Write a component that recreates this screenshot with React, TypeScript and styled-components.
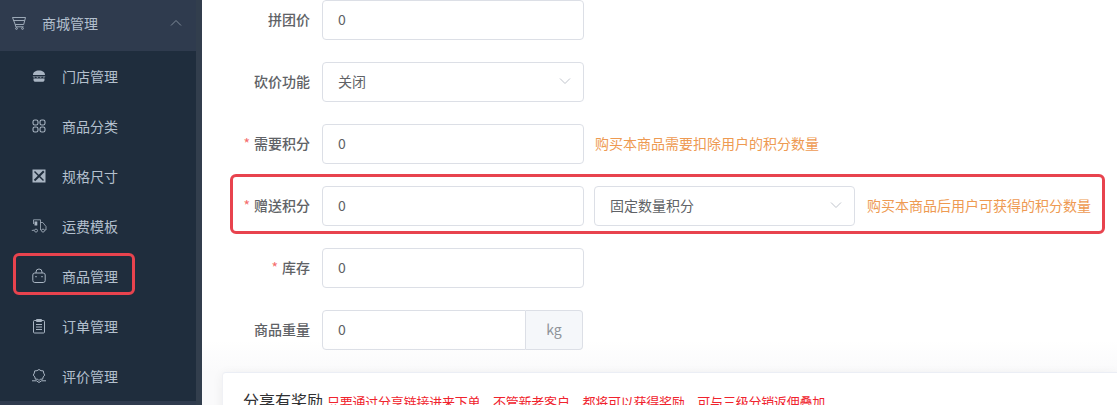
import React from "react";
import styled, { createGlobalStyle } from "styled-components";

const Global = createGlobalStyle`
  html, body { margin: 0; padding: 0; background: #fff; }
  body { font-family: "Noto Sans CJK SC", "Inter", sans-serif; }
  * { box-sizing: border-box; }
`;

const Page = styled.div`
  display: flex;
  width: 1117px;
  height: 405px;
  overflow: hidden;
  background: #fff;
`;

const Sidebar = styled.aside`
  flex: none;
  width: 202px;
  height: 405px;
  display: flex;
  flex-direction: column;
  background: #1f2d3d;
  border-right: 6px solid #323e4d;
  overflow: hidden;
`;

const ParentRow = styled.div`
  flex: none;
  height: 51px;
  display: flex;
  align-items: center;
  padding: 0 0 5px 11px;
  background: #2f3b4e;
  color: #b4c0ce;
  font-size: 14px;
`;

const ParentText = styled.span`
  margin-left: 15px;
  flex: 1;
`;

const Chevron = styled.svg`
  width: 12px;
  height: 8px;
  margin-right: 14px;
`;

const Item = styled.div`
  position: relative;
  flex: none;
  height: 50px;
  display: flex;
  align-items: center;
  padding-left: 31px;
  color: #b4c0ce;
  font-size: 14px;
`;

const ItemIcon = styled.svg`
  flex: none;
  width: 16px;
  height: 16px;
  color: #a9b5c3;
`;

const ItemText = styled.span`
  margin-left: 15px;
`;

const SideMark = styled.span`
  position: absolute;
  left: 13px;
  top: 2px;
  width: 122px;
  height: 42px;
  border: 3px solid #e8434e;
  border-radius: 6px;
`;

const SideEnd = styled.div`
  flex: none;
  height: 4px;
  background: #2f3b4e;
`;

const Main = styled.main`
  flex: 1;
  min-width: 0;
  display: flex;
  flex-direction: column;
  background: linear-gradient(#fff 340px, #fafafb 372px);
`;

const Row = styled.div`
  position: relative;
  flex: none;
  height: 40px;
  margin-bottom: 22px;
  display: flex;
  align-items: center;
`;

const Label = styled.label`
  flex: none;
  width: 108px;
  margin-right: 12px;
  padding-bottom: 2px;
  text-align: right;
  font-size: 14px;
  font-weight: 500;
  color: #606266;
`;

const Star = styled.span`
  color: #f56c6c;
  margin-right: 4px;
  font-weight: 400;
`;

const Field = styled.div<{ $w?: number }>`
  flex: none;
  width: ${(p) => p.$w ?? 262}px;
  height: 40px;
  display: flex;
  align-items: center;
  justify-content: space-between;
  padding: 0 12px 2px 15px;
  background: #fff;
  border: 1px solid #dcdfe6;
  border-radius: 4px;
  font-size: 14px;
  color: #606266;
`;

const Second = styled(Field)`
  margin-left: 10px;
`;

const Arrow = styled.svg`
  width: 12px;
  height: 8px;
`;

const Tip = styled.span<{ $gap: number }>`
  margin-left: ${(p) => p.$gap}px;
  padding-bottom: 2px;
  font-size: 14px;
  color: #ee9a52;
  white-space: nowrap;
`;

const RowMark = styled.span`
  position: absolute;
  left: 28px;
  right: 12px;
  top: -12px;
  bottom: -8px;
  border: 3px solid #e8434e;
  border-radius: 6px;
  pointer-events: none;
`;

const Group = styled.div`
  flex: none;
  width: 261px;
  height: 40px;
  display: flex;
`;

const GroupInput = styled.div`
  flex: 1;
  display: flex;
  align-items: center;
  padding: 0 0 2px 15px;
  border: 1px solid #dcdfe6;
  border-radius: 4px 0 0 4px;
  font-size: 14px;
  color: #606266;
`;

const GroupAppend = styled.div`
  flex: none;
  width: 57px;
  display: flex;
  align-items: center;
  justify-content: center;
  padding-bottom: 2px;
  background: #f5f7fa;
  border: 1px solid #dcdfe6;
  border-left: 0;
  border-radius: 0 4px 4px 0;
  font-size: 14px;
  color: #909399;
`;

const Card = styled.section`
  flex: none;
  margin-left: 20px;
  height: 60px;
  padding: 15px 20px;
  display: flex;
  align-items: baseline;
  background: #fff;
  border-top: 1px solid #ebeef5;
  border-left: 1px solid #f0f1f5;
  border-radius: 4px 0 0 0;
  box-shadow: 0 2px 12px rgba(0, 0, 0, 0.06);
`;

const CardTitle = styled.span`
  font-size: 16px;
  color: #303133;
`;

const CardNote = styled.span`
  margin-left: 4px;
  font-size: 13px;
  letter-spacing: -0.23px;
  color: #f0232d;
  white-space: nowrap;
`;

const CartIcon = () => (
  <ItemIcon viewBox="0 0 16 16" fill="none" stroke="currentColor" strokeWidth=".9">
    <path d="M1.500 2.500h13l-1.800 7H4.200z" />
    <path d="M2.500 5.500h11M4.200 9.500l.6 2.300h7.800" />
    <circle cx="5.500" cy="13.500" r=".9" />
    <circle cx="11.500" cy="13.500" r=".9" />
  </ItemIcon>
);
const BurgerIcon = () => (
  <ItemIcon viewBox="0 0 16 16" fill="currentColor">
    <path d="M2 7c0-3 2.500-4.500 6-4.500S14 4 14 7zM1.500 8.500h13l-1.500 1.200-1.700-1-1.700 1-1.600-1-1.600 1-1.700-1-1.700 1zM2.500 10.500h11V12c0 1-.8 1.800-2 1.800h-7c-1.200 0-2-.8-2-1.800z" />
  </ItemIcon>
);
const GridIcon = () => (
  <ItemIcon viewBox="0 0 16 16" fill="none" stroke="currentColor" strokeWidth="1.100">
    <rect x="2" y="2" width="5" height="5" rx="1.800" />
    <rect x="9" y="2" width="5" height="5" rx="1.800" />
    <rect x="2" y="9" width="5" height="5" rx="1.800" />
    <rect x="9" y="9" width="5" height="5" rx="1.800" />
  </ItemIcon>
);
const RulerIcon = () => (
  <ItemIcon viewBox="0 0 16 16">
    <rect x="1.500" y="1.500" width="13" height="13" fill="currentColor" />
    <path d="M3.500 3.500l9 9" stroke="#1f2d3d" strokeWidth="1.400" />
    <path d="M12.800 3.200l-9.300 9.300" stroke="#1f2d3d" strokeWidth="2" />
  </ItemIcon>
);
const TruckIcon = () => (
  <ItemIcon viewBox="0 0 16 16" fill="none" stroke="currentColor" strokeWidth=".8">
    <path d="M2.500 1.800h7V12M9.500 4.500h2.300L15 8.500V12h-1.200M9.500 12h.8M2.500 12H3M2.500 1.800V6" />
    <path d="M.8 12.400h2" />
    <rect x="3.500" y="3.500" width="2.800" height="4" fill="currentColor" stroke="none" />
    <circle cx="5" cy="12.600" r="1.500" />
    <circle cx="12" cy="12.600" r="1.500" />
  </ItemIcon>
);
const BagIcon = () => (
  <ItemIcon viewBox="0 0 16 16" fill="none" stroke="currentColor" strokeWidth="1">
    <rect x="1.800" y="5" width="12.400" height="9.500" rx="2" />
    <path d="M5 5V4a3 3 0 0 1 6 0v1" />
    <path d="M5 8v1.200M11 8v1.200" strokeWidth="1.300" />
  </ItemIcon>
);
const ClipIcon = () => (
  <ItemIcon viewBox="0 0 16 16" fill="none" stroke="currentColor" strokeWidth="1">
    <rect x="2.500" y="2.500" width="11" height="12.500" rx="1" />
    <path d="M5.500 1.500h5v2h-5zM5 6.500h6M5 9h6M5 11.500h6" />
  </ItemIcon>
);
const BadgeIcon = () => (
  <ItemIcon viewBox="0 0 16 16" fill="none" stroke="currentColor" strokeWidth="1">
    <path d="M8 1.500l2 1.200 2.300.2.400 2.200 1 2-1.500 1.800-.6 2.300-2.300 0L8 12.500 6.700 11.200l-2.300 0-.6-2.300L2.300 7.100l1-2 .4-2.200L6 2.700z" />
    <path d="M1 12.800h4.500L8 14.500l2.500-1.700H15" />
  </ItemIcon>
);

const ArrowDown = () => (
  <Arrow viewBox="0 0 12 8" fill="none" stroke="#c0c4cc" strokeWidth="1">
    <path d="M1 1.500l5 5 5-5" />
  </Arrow>
);

export default function App() {
  return (
    <Page>
      <Global />
      <Sidebar>
        <ParentRow>
          <CartIcon />
          <ParentText>商城管理</ParentText>
          <Chevron viewBox="0 0 12 8" fill="none" stroke="#7f8b99" strokeWidth="1">
            <path d="M1 6.500l5-5 5 5" />
          </Chevron>
        </ParentRow>
        <Item><BurgerIcon /><ItemText>门店管理</ItemText></Item>
        <Item><GridIcon /><ItemText>商品分类</ItemText></Item>
        <Item><RulerIcon /><ItemText>规格尺寸</ItemText></Item>
        <Item><TruckIcon /><ItemText>运费模板</ItemText></Item>
        <Item><BagIcon /><ItemText>商品管理</ItemText><SideMark /></Item>
        <Item><ClipIcon /><ItemText>订单管理</ItemText></Item>
        <Item><BadgeIcon /><ItemText>评价管理</ItemText></Item>
        <SideEnd />
      </Sidebar>
      <Main>
        <Row>
          <Label>拼团价</Label>
          <Field>0</Field>
        </Row>
        <Row>
          <Label>砍价功能</Label>
          <Field>关闭<ArrowDown /></Field>
        </Row>
        <Row>
          <Label><Star>*</Star>需要积分</Label>
          <Field>0</Field>
          <Tip $gap={11}>购买本商品需要扣除用户的积分数量</Tip>
        </Row>
        <Row>
          <Label><Star>*</Star>赠送积分</Label>
          <Field>0</Field>
          <Second $w={261}>固定数量积分<ArrowDown /></Second>
          <Tip $gap={12}>购买本商品后用户可获得的积分数量</Tip>
          <RowMark />
        </Row>
        <Row>
          <Label><Star>*</Star>库存</Label>
          <Field>0</Field>
        </Row>
        <Row>
          <Label>商品重量</Label>
          <Group>
            <GroupInput>0</GroupInput>
            <GroupAppend>kg</GroupAppend>
          </Group>
        </Row>
        <Card>
          <CardTitle>分享有奖励</CardTitle>
          <CardNote>只要通过分享链接进来下单，不管新老客户，都将可以获得奖励，可与三级分销返佣叠加</CardNote>
        </Card>
      </Main>
    </Page>
  );
}
